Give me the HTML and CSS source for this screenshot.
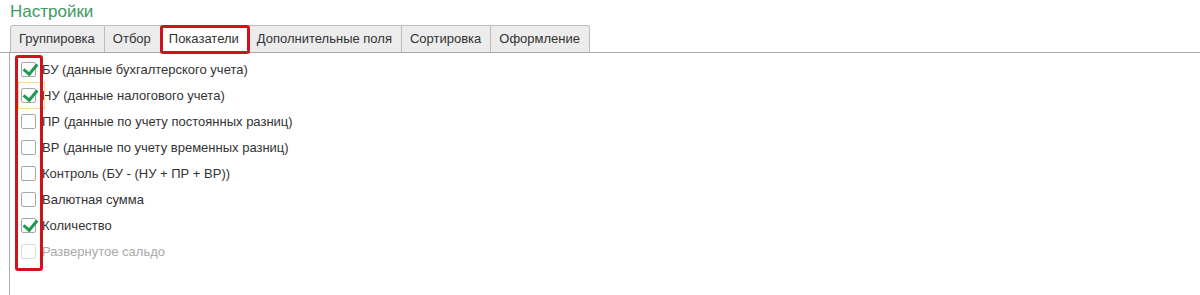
FILE: index.html
```html
<!doctype html>
<html>
<head>
<meta charset="utf-8">
<title>Настройки</title>
<link rel="stylesheet" href="styles.css">
</head>
<body>
<div class="settings">
	<div class="title">Настройки</div>
	<ul class="tabs">
		<li>Группировка</li>
		<li>Отбор</li>
		<li class="active">Показатели</li>
		<li>Дополнительные поля</li>
		<li>Сортировка</li>
		<li>Оформление</li>
	</ul>
	<div class="panel">
		<ul class="checks">
			<li><span class="box on"></span>БУ (данные бухгалтерского учета)</li>
			<li class="focus"><span class="box on"></span>НУ (данные налогового учета)</li>
			<li><span class="box"></span>ПР (данные по учету постоянных разниц)</li>
			<li><span class="box"></span>ВР (данные по учету временных разниц)</li>
			<li><span class="box"></span>Контроль (БУ - (НУ + ПР + ВР))</li>
			<li><span class="box"></span>Валютная сумма</li>
			<li><span class="box on"></span>Количество</li>
			<li class="disabled"><span class="box"></span>Развернутое сальдо</li>
		</ul>
		<div class="mark"></div>
	</div>
</div>
</body>
</html>
```

FILE: styles.css
```css
*{margin:0;padding:0;list-style:none;box-sizing:border-box;}
body{background:#fff;font-family:"Liberation Sans",Arial,sans-serif;font-size:13px;color:#333;}
.settings{padding:2px 0 0 0;height:295px;display:flex;flex-direction:column;}
.title{font-size:17px;color:#3c9a60;padding-left:10px;height:23px;line-height:20px;}

.tabs{display:flex;padding-left:10px;border-bottom:1px solid #aaa;height:28px;}
.tabs li{background:#ececec;border:1px solid #bdbdbd;border-bottom:none;margin-right:-1px;padding:0 9px 0 8px;line-height:26px;color:#333;border-radius:2px 2px 0 0;}
.tabs li.active{background:#fff;position:relative;margin-bottom:-1px;}
.tabs li.active::after{content:"";position:absolute;left:-1px;top:-1px;right:-2px;bottom:-1px;border:3px solid #d0121b;border-radius:3px;}

.panel{position:relative;flex:1;margin-left:9px;border-left:1px solid #aaa;padding:3px 0 0 11px;}
.checks li{display:flex;align-items:center;height:26px;color:#333;}
.box{width:15px;height:15px;border:1px solid #a8a8a8;border-radius:2px;background:#fff;margin-right:6px;position:relative;}
.box.on::after{content:"";position:absolute;left:4px;top:-2px;width:6px;height:11px;border:solid #1f9a50;border-width:0 3px 3px 0;transform:rotate(40deg);}
.checks li.disabled{color:#aaa;}
.checks li.disabled .box{border-color:#ddd;}
.checks li.focus{position:relative;}
.checks li.focus::before{content:"";position:absolute;left:-3px;top:0;width:25px;height:25px;border:1px solid #f1dc8f;}

.mark{position:absolute;left:5px;top:2px;width:28px;height:216px;border:3px solid #d0121b;border-radius:3px;}
```
